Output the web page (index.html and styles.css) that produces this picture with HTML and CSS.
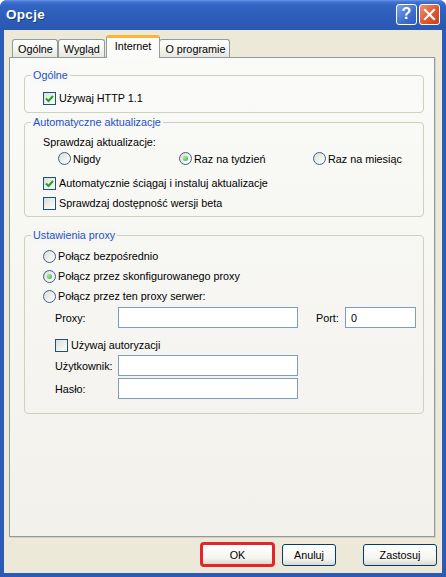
FILE: index.html
```html
<!DOCTYPE html>
<html lang="pl">
<head>
<meta charset="utf-8">
<title>Opcje</title>
<link rel="stylesheet" href="styles.css">
</head>
<body>
<div class="window">
  <div class="titlebar">
    <span class="title">Opcje</span>
    <span class="cbtn help">?</span>
    <span class="cbtn close"><svg width="13" height="13" viewBox="0 0 13 13"><path d="M2 2 L11 11 M11 2 L2 11" stroke="#fff" stroke-width="2.2" stroke-linecap="square"/></svg></span>
  </div>
  <div class="client">
    <div class="tabs">
      <div class="tab">Ogólne</div>
      <div class="tab">Wygląd</div>
      <div class="tab active">Internet</div>
      <div class="tab">O programie</div>
    </div>
    <div class="panel">
      <div class="group g1">
        <span class="group-title">Ogólne</span>
        <div class="row"><span class="check on"><svg width="11" height="11" viewBox="0 0 11 11"><path d="M2 5.5 L4.5 8 L9 3" fill="none" stroke="#21A121" stroke-width="2"/></svg></span>Używaj HTTP 1.1</div>
      </div>
      <div class="group g2">
        <span class="group-title">Automatyczne aktualizacje</span>
        <div class="row r17">Sprawdzaj aktualizacje:</div>
        <div class="radio-grid">
          <div class="row r17"><span class="radio"></span>Nigdy</div>
          <div class="row r17"><span class="radio on"><span class="dot"></span></span>Raz na tydzień</div>
          <div class="row r17"><span class="radio"></span>Raz na miesiąc</div>
        </div>
        <div class="row r18 mt7"><span class="check on"><svg width="11" height="11" viewBox="0 0 11 11"><path d="M2 5.5 L4.5 8 L9 3" fill="none" stroke="#21A121" stroke-width="2"/></svg></span>Automatycznie ściągaj i instaluj aktualizacje</div>
        <div class="row r18 mt2"><span class="check"></span>Sprawdzaj dostępność wersji beta</div>
      </div>
      <div class="group g3">
        <span class="group-title">Ustawienia proxy</span>
        <div class="row"><span class="radio"></span>Połącz bezpośrednio</div>
        <div class="row"><span class="radio on"><span class="dot"></span></span>Połącz przez skonfigurowanego proxy</div>
        <div class="row"><span class="radio"></span>Połącz przez ten proxy serwer:</div>
        <div class="field-row mt1">
          <span class="field-label">Proxy:</span>
          <input class="field" type="text">
          <span class="port-label">Port:</span>
          <input class="field port" type="text" value="0">
        </div>
        <div class="row indent mt7"><span class="check"></span>Używaj autoryzacji</div>
        <div class="field-row">
          <span class="field-label">Użytkownik:</span>
          <input class="field" type="text">
        </div>
        <div class="field-row mt2">
          <span class="field-label">Hasło:</span>
          <input class="field" type="password">
        </div>
      </div>
    </div>
    <div class="buttons">
      <button class="btn ok">OK</button>
      <button class="btn cancel">Anuluj</button>
      <button class="btn apply">Zastosuj</button>
    </div>
  </div>
</div>
</body>
</html>
```
FILE: styles.css
```css
* { box-sizing: border-box; }
html, body { margin: 0; padding: 0; background: #ffffff; }
body {
  width: 446px;
  height: 577px;
  font-family: "Liberation Sans", Arial, sans-serif;
  font-size: 10.8px;
  color: #000;
}
.window {
  width: 446px;
  height: 577px;
  display: flex;
  flex-direction: column;
  background: #2C5BB7;
  border-radius: 7px 7px 0 0;
  overflow: hidden;
}
.titlebar {
  flex: none;
  height: 30px;
  display: flex;
  align-items: center;
  padding: 0 6px 2px 6px;
  background: linear-gradient(to bottom, #6B97E4 0px, #3F72D2 2px, #3163C0 6px, #2D5DB9 18px, #2A58B1 30px);
}
.title {
  flex: 1;
  color: #fff;
  font-weight: bold;
  font-size: 13.5px;
  letter-spacing: 0.3px;
  text-shadow: 1px 1px 0 #1B3B85;
}
.cbtn {
  width: 21px;
  height: 21px;
  border: 1px solid #fff;
  border-radius: 3px;
  display: flex;
  align-items: center;
  justify-content: center;
  color: #fff;
}
.help {
  margin-right: 2px;
  background: linear-gradient(to bottom right, #7DA2EC, #3D6DD3 60%, #2F5CC0);
  font-size: 16px;
  font-weight: bold;
  line-height: 1;
}
.close {
  background: linear-gradient(to bottom right, #F0926E, #E0572E 55%, #C9411E);
}
.client {
  flex: 1;
  margin: 0 4px 4px 4px;
  background: #ECE9D8;
  display: flex;
  flex-direction: column;
  padding-top: 5px;
}
.tabs {
  height: 22px;
  display: flex;
  align-items: flex-end;
  padding-left: 8px;
}
.tab {
  height: 18px;
  padding: 0 4px 0 5px;
  border: 1px solid #919B9C;
  border-bottom: none;
  border-radius: 3px 3px 0 0;
  background: linear-gradient(to bottom, #FFFFFF, #F3F3EF 60%, #E6E5DE);
  display: flex;
  align-items: center;
  white-space: nowrap;
}
.tab.active {
  height: 23px;
  margin: 0 -1px -1px 1px;
  padding: 1px 8px 0 8px;
  align-items: flex-start;
  border-top: 3px solid #F7B63A;
  background: #FBFBF9;
  position: relative;
  z-index: 1;
  line-height: 14px;
}
.panel {
  width: 426px;
  height: 480px;
  margin-left: 5px;
  border: 1px solid #919B9C;
  background: linear-gradient(to bottom, #FAFAF8, #F2F1EC);
  box-shadow: 1px 1px 0 #D4D2C6;
  padding: 17px 0 0 14px;
}
.group {
  width: 400px;
  border: 1px solid #D0D0BF;
  border-radius: 4px;
  position: relative;
  padding-left: 18px;
}
.group-title {
  position: absolute;
  top: -8px;
  left: 6px;
  padding: 0 2px;
  color: #1E50C8;
  background: #F8F8F5;
  line-height: 14px;
}
.g1 { height: 38px; padding-top: 12px; }
.g2 { height: 95px; margin-top: 9px; padding-top: 10px; }
.g3 { height: 179px; margin-top: 18px; padding-top: 10px; }
.g3 .group-title { background: #F5F5F1; }
.row {
  height: 20px;
  display: flex;
  align-items: center;
  white-space: nowrap;
}
.r17 { height: 17px; }
.r18 { height: 18px; }
.mt1 { margin-top: 1px; }
.mt2 { margin-top: 2px; }
.mt7 { margin-top: 7px; }
.indent { padding-left: 12px; }
.radio-grid {
  display: grid;
  grid-template-columns: 121px 134px auto;
  padding-left: 15px;
}
.check {
  width: 13px;
  height: 13px;
  flex: none;
  border: 1px solid #1C5180;
  background: linear-gradient(135deg, #DCDCD7, #FFFFFF);
  margin-right: 3px;
  display: flex;
  align-items: center;
  justify-content: center;
}
.radio {
  width: 13px;
  height: 13px;
  flex: none;
  border: 1px solid #3D5E8A;
  border-radius: 50%;
  background: linear-gradient(135deg, #DCDCD7, #FFFFFF);
  margin-right: 2px;
  display: flex;
  align-items: center;
  justify-content: center;
}
.dot {
  width: 5px;
  height: 5px;
  border-radius: 50%;
  background: radial-gradient(circle at 35% 35%, #A6E6A6, #2FB42F);
}
.field-row {
  height: 21px;
  display: flex;
  align-items: center;
  padding-left: 12px;
}
.field-label { width: 63px; flex: none; }
.port-label { width: 29px; margin-left: 18px; flex: none; }
.field {
  width: 180px;
  height: 21px;
  border: 1px solid #7F9DB9;
  background: #fff;
  font-family: "Liberation Sans", Arial, sans-serif;
  font-size: 10.8px;
  padding: 0 5px;
  margin: 0;
  outline: none;
  color: #000;
}
.field.port { width: 71px; }
.buttons {
  flex: 1;
  display: flex;
  align-items: center;
  justify-content: flex-end;
  padding: 0 5px 1px 0;
}
.btn {
  height: 22px;
  margin: 0;
  border: 1px solid #003C74;
  border-radius: 3px;
  background: linear-gradient(to bottom, #FFFFFF, #F4F4F0 70%, #DCD8CC);
  font-family: "Liberation Sans", Arial, sans-serif;
  font-size: 10.8px;
  color: #000;
  padding: 0;
}
.ok {
  width: 75px;
  height: 25px;
  border: 3px solid #E3262E;
  border-radius: 4px;
  margin-right: 7px;
}
.cancel { width: 54px; margin-right: 27px; }
.apply { width: 74px; }
```
